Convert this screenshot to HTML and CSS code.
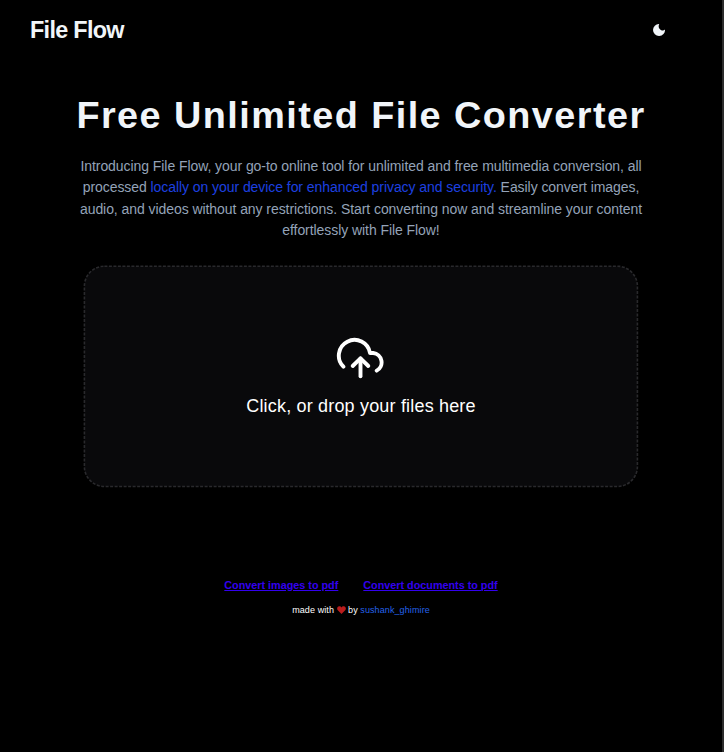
FILE: index.html
```html
<!DOCTYPE html>
<html lang="en">
<head>
<meta charset="utf-8">
<title>File Flow</title>
<link rel="stylesheet" href="styles.css">
</head>
<body>
<header class="nav">
  <a class="brand">File Flow</a>
  <button class="theme" aria-label="Toggle theme">
    <svg class="moon" viewBox="0 0 12 12"><path d="M6.2 0A6 6 0 1 0 12 5.6C11.2 6.5 10 6.8 8.8 6.4C6.2 5.6 4.8 2.8 6.2 0Z" fill="#f1f5f9"/></svg>
  </button>
</header>
<main class="main">
  <h1 class="title">Free Unlimited File Converter</h1>
  <p class="intro">Introducing File Flow, your go-to online tool for unlimited and free multimedia conversion, all<br>processed <span class="accent">locally on your device for enhanced privacy and security.</span> Easily convert images,<br>audio, and videos without any restrictions. Start converting now and streamline your content<br>effortlessly with File Flow!</p>
  <section class="drop">
    <svg class="frame" viewBox="0 0 555 222"><rect x="1.4" y="1.2" width="553" height="220.3" rx="20" fill="#09090b" stroke="#29292c" stroke-width="1.6" stroke-dasharray="3 1.5"/></svg>
    <svg class="cloud" viewBox="336 336 50 43" fill="none" stroke="#fff" stroke-width="3.9" stroke-linecap="round" stroke-linejoin="round"><path d="M343.4 365.7A15.7 15.7 0 1 1 370 352h3.2A9.4 9.4 0 0 1 376.7 369.6"/><path d="M360.5 357.5V375.2"/><path d="M352.7 365L360.5 357.3L368.3 365"/></svg>
    <p class="prompt">Click, or drop your files here</p>
  </section>
</main>
<footer class="footer">
  <nav class="links"><a href="#">Convert images to pdf</a><a href="#">Convert documents to pdf</a></nav>
  <p class="credit"><span>made with</span><svg class="heart" viewBox="0 0 9 8"><path d="M4.5 8L.8 4.2C-.5 2.6.2.3 2.2.2C3.3.1 4 .7 4.5 1.4C5 .7 5.7.1 6.8.2C8.8.3 9.5 2.6 8.2 4.2Z" fill="#b91c1c"/></svg><span>by</span><a class="author">sushank_ghimire</a></p>
</footer>
</body>
</html>
```
FILE: styles.css
```css
* { box-sizing: border-box; margin: 0; padding: 0; }
body {
  height: 752px;
  background: #000;
  border-right: 2px solid #2b2b2b;
  font-family: "Liberation Sans", Arial, sans-serif;
  color: #f1f5f9;
}
.nav { height: 60px; padding: 0 57px 0 30px; display: flex; justify-content: space-between; align-items: center; }
.brand { font-size: 23.4px; font-weight: 700; letter-spacing: -0.7px; }
.theme { border: 0; background: none; display: flex; }
.moon { width: 12px; height: 12px; }
.main { padding-top: 33px; display: flex; flex-direction: column; align-items: center; }
.title { font-size: 37.8px; line-height: 44px; letter-spacing: 1.45px; white-space: nowrap; }
.intro { margin-top: 19px; font-size: 14px; line-height: 21.4px; letter-spacing: -0.065px; text-align: center; color: #94a3b8; white-space: nowrap; }
.accent { color: #1d40e0; }
.drop {
  position: relative;
  width: 554px; height: 222px; margin-top: 23px;
  display: flex; flex-direction: column; align-items: center; padding-top: 72px;
}
.frame { position: absolute; top: 0; left: -1px; width: 555px; height: 222px; overflow: visible; }
.cloud { position: relative; width: 50px; height: 43px; }
.prompt { position: relative; margin-top: 15px; font-size: 18px; letter-spacing: 0.18px; line-height: 22px; color: #fff; }
.footer { padding-top: 91px; display: flex; flex-direction: column; align-items: center; }
.links { display: flex; gap: 25px; font-size: 10.8px; line-height: 14px; font-weight: 700; }
.links a { color: #3300ee; }
.credit { margin-top: 12px; display: flex; align-items: center; gap: 2.5px; font-size: 9px; line-height: 12px; color: #fff; }
.credit span, .author { letter-spacing: 0.1px; }
.heart { width: 9px; height: 8px; }
.author { color: #2563eb; }
```
